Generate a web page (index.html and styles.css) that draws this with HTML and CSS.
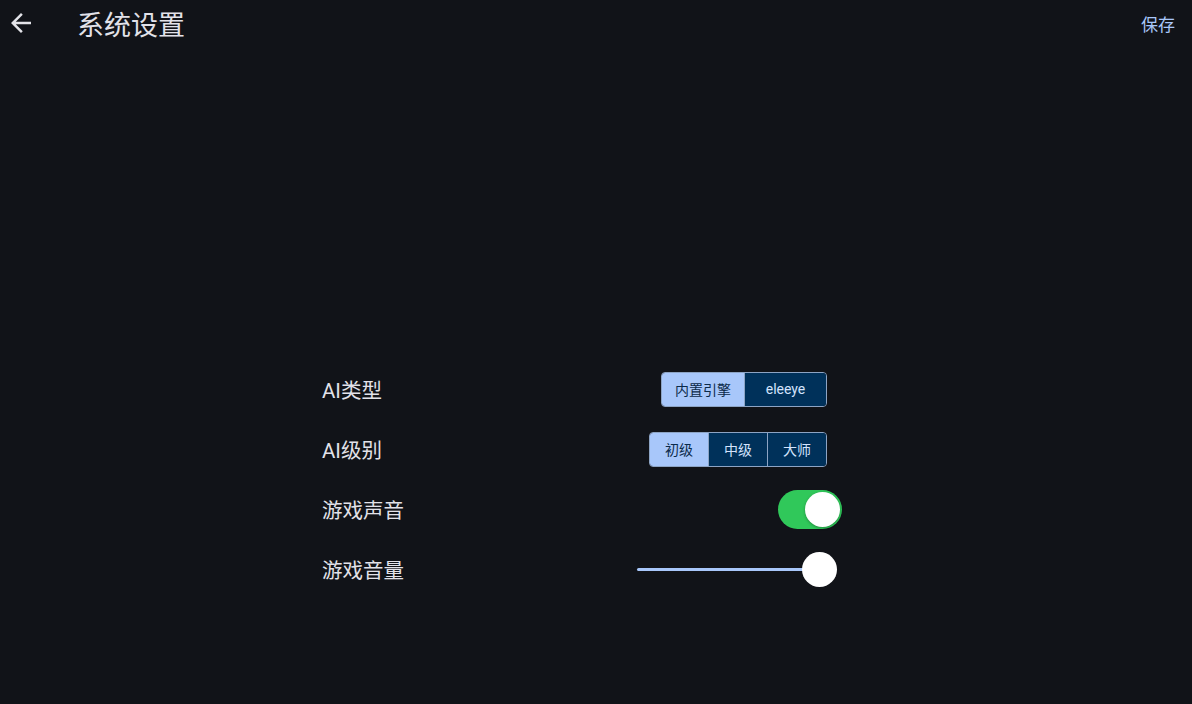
FILE: index.html
```html
<html>
<head>
    <title>系统设置</title>
    <meta http-equiv="Content-Type" content="text/html; charset=UTF-8"/>
    <meta name="viewport" content="width=device-width, initial-scale=1.0">
    <link rel="stylesheet" href="styles.css">
</head>
<body>
<div class="appbar">
    <div class="back">
        <svg width="30" height="30" viewBox="0 0 24 24"><path d="M20 11H7.83l5.59-5.59L12 4l-8 8 8 8 1.41-1.41L7.83 13H20v-2z" fill="#e3e3e8"/></svg>
    </div>
    <div class="title">系统设置</div>
    <div class="action">保存</div>
</div>
<div class="settings">
    <div class="row">
        <div class="label">AI类型</div>
        <div class="segmented wide">
            <div class="seg on">内置引擎</div>
            <div class="seg">eleeye</div>
        </div>
    </div>
    <div class="row">
        <div class="label">AI级别</div>
        <div class="segmented">
            <div class="seg on">初级</div>
            <div class="seg">中级</div>
            <div class="seg">大师</div>
        </div>
    </div>
    <div class="row">
        <div class="label">游戏声音</div>
        <div class="switch on"><div class="knob"></div></div>
    </div>
    <div class="row">
        <div class="label">游戏音量</div>
        <div class="slider">
            <div class="track"></div>
            <div class="thumb"></div>
        </div>
    </div>
</div>
</body>
</html>
```

FILE: styles.css
```css
html, body {
    margin: 0px;
    background: #111318;
    color: #e2e2e9;
    font-family: "Roboto", "Noto Sans CJK SC", sans-serif;
}

* {
    box-sizing: border-box;
}

.appbar {
    display: flex;
    align-items: center;
    height: 46px;
}

.back {
    width: 42px;
    padding-left: 6px;
    display: flex;
    align-items: center;
}

.title {
    margin-left: 35px;
    font-size: 27px;
    color: #e2e2e9;
    flex: 1;
}

.action {
    font-size: 17px;
    color: #a8c7fa;
    padding-right: 17px;
}

.settings {
    width: 520px;
    margin: 313px 0 0 322px;
}

.row {
    height: 60px;
    display: flex;
    align-items: center;
    justify-content: space-between;
}

.label {
    font-size: 20.5px;
    color: #e2e2e9;
}

/* сегментированный переключатель */
.segmented {
    display: flex;
    height: 35px;
    margin-right: 15px;
    border: 1px solid #8da4c4;
    border-radius: 4px;
    overflow: hidden;
}

.seg {
    display: flex;
    align-items: center;
    justify-content: center;
    padding: 0 15px;
    font-size: 14px;
    background: #00315a;
    color: #d3e3fd;
}

.seg + .seg {
    border-left: 1px solid #8da4c4;
}

.seg.on {
    background: #a8c7fa;
    color: #0b2a4a;
}

.wide .seg {
    min-width: 82px;
    padding: 0 13px;
}

.switch {
    width: 64px;
    height: 39px;
    border-radius: 20px;
    background: #30c85a;
    padding: 2px;
    display: flex;
    justify-content: flex-end;
}

.knob {
    width: 35px;
    height: 35px;
    border-radius: 50%;
    background: #fff;
    box-shadow: 0 1px 3px rgba(0, 0, 0, .3);
}

.slider {
    width: 205px;
    display: flex;
    align-items: center;
}

.track {
    flex: 1;
    height: 3px;
    margin-right: -2px;
    background: #a8c7fa;
    border-radius: 2px;
}

.thumb {
    width: 35px;
    height: 35px;
    border-radius: 50%;
    background: #fff;
    margin-right: 5px;
}
```
